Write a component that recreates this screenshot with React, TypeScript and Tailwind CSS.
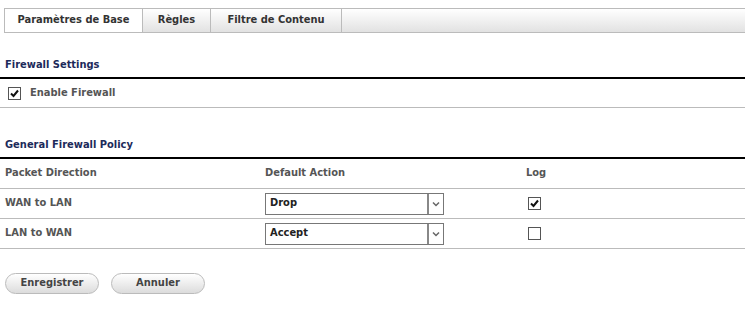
import React from 'react';

const font = "font-['DejaVu_Sans_Condensed','DejaVu_Sans',sans-serif]";

const Check: React.FC<{ checked?: boolean }> = ({ checked }) => (
  <span className="inline-flex h-[13px] w-[13px] items-center justify-center border border-[#555] bg-white">
    {checked && (
      <svg width="11" height="11" viewBox="0 0 11 11">
        <path d="M2 5.5 L4.5 8 L9 2.5" fill="none" stroke="#111" strokeWidth="2" />
      </svg>
    )}
  </span>
);

const Select: React.FC<{ value: string }> = ({ value }) => (
  <div className="flex h-[22px] w-[179px] items-stretch border border-[#777] bg-white">
    <div className="flex flex-1 items-center pl-[4px] text-[11px] font-bold text-[#222]">{value}</div>
    <div className="flex w-[16px] items-center justify-center border-l-2 border-[#888]">
      <svg width="8" height="6" viewBox="0 0 8 6">
        <path d="M1 1.5 L4 4.5 L7 1.5" fill="none" stroke="#666" strokeWidth="1.5" />
      </svg>
    </div>
  </div>
);

const Row: React.FC<{ dir: string; action: string; log: boolean }> = ({ dir, action, log }) => (
  <div className="flex h-[30px] items-center border-b border-[#bbb]">
    <div className="w-[265px] pl-[5px]">{dir}</div>
    <div className="w-[263px]"><Select value={action} /></div>
    <Check checked={log} />
  </div>
);

export default function App() {
  return (
    <div className={`${font} h-[314px] w-[752px] bg-white text-[11px] font-bold text-[#555]`}>
      <div className="pl-[4px] pr-[7px] pt-[8px]">
        <div className="flex h-[25px] border-y border-[#bbb] bg-gradient-to-b from-white to-[#e2e2e2]">
          <div className="flex w-[138px] items-center justify-center border-l border-[#bbb] bg-white text-[#333]">Paramètres de Base</div>
          <div className="flex w-[68px] items-center justify-center border-l border-[#bbb] text-[#333]">Règles</div>
          <div className="flex w-[132px] items-center justify-center border-x border-[#bbb] text-[#333]">Filtre de Contenu</div>
        </div>
      </div>

      <div className="pr-[7px]">
        <div className="mt-[23px] h-[23px] border-b-2 border-black pl-[5px] pt-[1px] text-[#1c2a5a]">Firewall Settings</div>
        <div className="flex h-[29px] items-center gap-[9px] border-b border-[#bbb] pl-[8px]">
          <Check checked />
          <span>Enable Firewall</span>
        </div>

        <div className="mt-[29px] h-[22px] border-b-2 border-black pl-[5px] text-[#1c2a5a]">General Firewall Policy</div>
        <div className="flex h-[30px] items-center border-b border-[#bbb]">
          <div className="w-[265px] pl-[5px]">Packet Direction</div>
          <div className="w-[261px]">Default Action</div>
          <div>Log</div>
        </div>
        <Row dir="WAN to LAN" action="Drop" log />
        <Row dir="LAN to WAN" action="Accept" log={false} />
      </div>

      <div className="mt-[24px] flex gap-[12px] pl-[5px]">
        <button className="h-[21px] w-[94px] rounded-full border border-[#bbb] bg-gradient-to-b from-white to-[#dcdcdc] font-bold text-[#444]">Enregistrer</button>
        <button className="h-[21px] w-[94px] rounded-full border border-[#bbb] bg-gradient-to-b from-white to-[#dcdcdc] font-bold text-[#444]">Annuler</button>
      </div>
    </div>
  );
}
